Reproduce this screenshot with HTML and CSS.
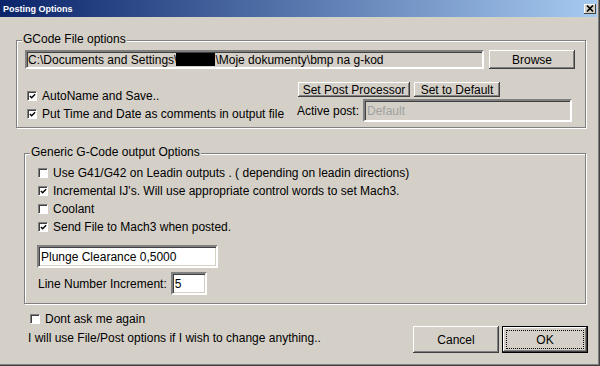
FILE: index.html
```html
<!DOCTYPE html>
<html lang="en">
  <head>
    <meta charset="UTF-8" />
    <title>Posting Options</title>
    <link rel="stylesheet" href="styles.css">
  </head>
  <body>
    <div class="window">
      <div class="titlebar">
        <span class="title">Posting Options</span>
        <span class="close">
          <svg width="8" height="7" viewBox="0 0 8 7"><path d="M1 0.5 L7 6.5 M7 0.5 L1 6.5" stroke="#000" stroke-width="1.6" /></svg>
        </span>
      </div>

      <div class="group group-file">
        <div class="group-title">GCode File options</div>
        <div class="path-row">
          <div class="field field-path">C:\Documents and Settings\<span class="redact"></span>\Moje dokumenty\bmp na g-kod</div>
          <button class="btn btn-browse">Browse</button>
        </div>
        <div class="file-row">
          <div class="checks">
            <div class="check"><span class="box is-checked"><svg width="8" height="8" viewBox="0 0 8 8"><path d="M1 3.5 L3 5.5 L7 1.5" fill="none" stroke="#000" stroke-width="1.6" /></svg></span>AutoName and Save..</div>
            <div class="check"><span class="box is-checked"><svg width="8" height="8" viewBox="0 0 8 8"><path d="M1 3.5 L3 5.5 L7 1.5" fill="none" stroke="#000" stroke-width="1.6" /></svg></span>Put Time and Date as comments in output file</div>
          </div>
          <div class="post">
            <div class="post-buttons">
              <button class="btn btn-post">Set Post Processor</button>
              <button class="btn btn-reset">Set to Default</button>
            </div>
            <div class="post-active">
              <span>Active post:</span>
              <div class="field field-post">Default</div>
            </div>
          </div>
        </div>
      </div>

      <div class="group group-gcode">
        <div class="group-title">Generic G-Code output Options</div>
        <div class="options">
          <div class="check"><span class="box"></span>Use G41/G42 on Leadin outputs . ( depending on leadin directions)</div>
          <div class="check"><span class="box is-checked"><svg width="8" height="8" viewBox="0 0 8 8"><path d="M1 3.5 L3 5.5 L7 1.5" fill="none" stroke="#000" stroke-width="1.6" /></svg></span>Incremental IJ's. Will use appropriate control words to set Mach3.</div>
          <div class="check"><span class="box"></span>Coolant</div>
          <div class="check"><span class="box is-checked"><svg width="8" height="8" viewBox="0 0 8 8"><path d="M1 3.5 L3 5.5 L7 1.5" fill="none" stroke="#000" stroke-width="1.6" /></svg></span>Send File to Mach3 when posted.</div>
        </div>
        <div class="field field-plunge">Plunge Clearance 0,5000</div>
        <div class="line-row">
          <span>Line Number Increment:</span>
          <div class="field field-step">5</div>
        </div>
      </div>

      <div class="footer">
        <div class="footer-left">
          <div class="check"><span class="box"></span>Dont ask me again</div>
          <div class="note">I will use File/Post options if I wish to change anything..</div>
        </div>
        <div class="actions">
          <button class="btn btn-action">Cancel</button>
          <button class="btn btn-action btn-ok">OK</button>
        </div>
      </div>
    </div>
  </body>
</html>
```

FILE: styles.css
```css
body {
  margin: 0;
  padding: 0;
  background: #d4d0c8;
  font: 12px/14px "Liberation Sans", Arial, sans-serif;
  color: #000;
}

.window {
  width: 600px;
  height: 366px;
  box-sizing: border-box;
  background: #d4d0c8;
  box-shadow: inset -1px -1px #404040, inset -2px -2px #808080;
  overflow: hidden;
}

.titlebar {
  height: 17px;
  margin-right: 3px;
  padding: 0 1px 0 3px;
  display: flex;
  align-items: center;
  justify-content: space-between;
  background: linear-gradient(to right, #0a246a, #a6caf0);
  color: #fff;
  font-size: 9px;
  font-weight: bold;
}

.close {
  width: 12px;
  height: 10px;
  box-sizing: border-box;
  display: flex;
  align-items: center;
  justify-content: center;
  background: #d4d0c8;
  box-shadow: inset -1px -1px #404040, inset 1px 1px #fff;
}

.close svg {
  display: block;
}

/* etched group box */
.group {
  box-sizing: border-box;
  border: 1px solid #808080;
  box-shadow: inset 1px 1px #fff, 1px 1px #fff;
}

.group-title {
  width: fit-content;
  margin-top: -9px;
  padding: 0 1px;
  background: #d4d0c8;
}

.group-file {
  width: 570px;
  height: 88px;
  margin: 23px 0 0 16px;
  padding: 0 10px 0 8px;
}

.group-file .group-title {
  margin-left: -3px;
}

.group-gcode {
  width: 562px;
  height: 151px;
  margin: 25px 0 0 24px;
  padding: 0 0 0 13px;
}

.group-gcode .group-title {
  margin-left: -8px;
}

/* sunken edit field */
.field {
  box-sizing: border-box;
  display: flex;
  align-items: center;
  padding: 0 2px;
  white-space: nowrap;
  border: 2px solid;
  border-color: #808080 #fff #fff #808080;
  box-shadow: inset 1px 1px #404040, inset -1px -1px #d4d0c8;
  background: #fff;
}

.btn {
  box-sizing: border-box;
  margin: 0;
  padding: 0;
  border: 0;
  font: inherit;
  color: #000;
  background: #d4d0c8;
  box-shadow: inset -1px -1px #404040, inset 1px 1px #fff, inset -2px -2px #808080;
  white-space: nowrap;
}

.check {
  height: 18px;
  display: flex;
  align-items: center;
  white-space: nowrap;
}

.box {
  width: 10px;
  height: 10px;
  box-sizing: border-box;
  margin-right: 5px;
  display: flex;
  align-items: center;
  justify-content: center;
  background: #fff;
  border: 1px solid;
  border-color: #808080 #fff #fff #808080;
  box-shadow: inset 1px 1px #404040;
}

.box svg {
  display: block;
  width: 7px;
  height: 7px;
}

.path-row {
  display: flex;
  gap: 5px;
  margin-top: 4px;
}

.field-path {
  width: 459px;
  height: 19px;
  padding-left: 1px;
  background: #d4d0c8;
}

.redact {
  display: inline-block;
  width: 39px;
  height: 13px;
  margin-left: -1px;
  background: #000;
}

.btn-browse {
  width: 86px;
  height: 19px;
}

.file-row {
  display: flex;
  margin-top: 13px;
}

.checks {
  margin: 5px 0 0 2px;
}

.post {
  width: 278px;
  margin-left: auto;
}

.post-buttons {
  display: flex;
  gap: 4px;
  padding-left: 1px;
}

.btn-post {
  width: 112px;
  height: 15px;
}

.btn-reset {
  width: 86px;
  height: 15px;
}

.post-active {
  display: flex;
  align-items: center;
  margin-top: 2px;
}

.field-post {
  width: 209px;
  height: 23px;
  margin: 0 3px 0 auto;
  background: #d4d0c8;
  color: #a0a0a0;
}

.options {
  margin-top: 5px;
}

.field-plunge {
  width: 181px;
  height: 23px;
  margin: 9px 0 0 -1px;
}

.line-row {
  display: flex;
  align-items: center;
  gap: 4px;
  margin-top: 4px;
}

.field-step {
  width: 36px;
  height: 23px;
}

.footer {
  display: flex;
  padding: 6px 12px 0 28px;
}

.footer .check {
  margin-left: 2px;
}

.note {
  margin-top: 1px;
  line-height: 18px;
}

.actions {
  display: flex;
  gap: 3px;
  margin: 16px 0 0 auto;
}

.btn-action {
  width: 86px;
  height: 27px;
}

.btn-ok {
  border: 1px solid #000;
  outline: 1px dotted #000;
  outline-offset: -5px;
}
```
